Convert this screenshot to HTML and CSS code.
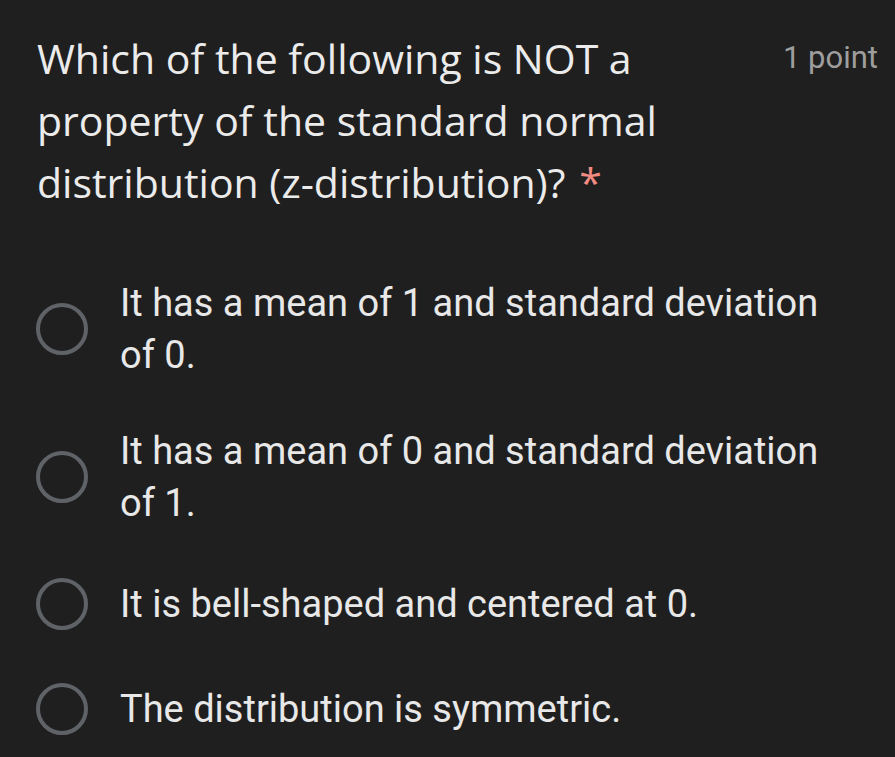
FILE: index.html
```html
<!DOCTYPE html>
<html>
<head>
<meta charset="utf-8">
<link rel="stylesheet" href="styles.css">
</head>
<body>
<div class="card">
  <div class="header">
    <div class="title">Which of the following is NOT a property of the standard normal distribution (z-distribution)?<span class="req">*</span></div>
    <div class="points">1 point</div>
  </div>
  <div class="options">
    <div class="option"><span class="radio"></span><span class="label">It has a mean of 1 and standard deviation of 0.</span></div>
    <div class="option"><span class="radio"></span><span class="label">It has a mean of 0 and standard deviation of 1.</span></div>
    <div class="option"><span class="radio"></span><span class="label">It is bell-shaped and centered at 0.</span></div>
    <div class="option"><span class="radio"></span><span class="label">The distribution is symmetric.</span></div>
  </div>
</div>
</body>
</html>
```

FILE: styles.css
```css
html, body {
  margin: 0;
  padding: 0;
  background: #1f1f1f;
  height: 100%;
}
.card {
  padding: 27px 17px 0 37px;
  color: #e8e8e8;
}
.header {
  display: flex;
  justify-content: space-between;
  align-items: flex-start;
}
.title {
  width: 700px;
  font-family: "Open Sans", "Liberation Sans", sans-serif;
  font-size: 41px;
  line-height: 62px;
  color: #ebebeb;
}
.req {
  color: #f28b82;
  margin-left: 14px;
}
.points {
  font-family: Roboto, "Liberation Sans", sans-serif;
  font-size: 31px;
  line-height: 62px;
  color: #9e9e9e;
  white-space: nowrap;
}
.options {
  margin-top: 42px;
}
.option {
  display: flex;
  align-items: center;
  padding: 22px 0;
  min-height: 105px;
  box-sizing: border-box;
}
.radio {
  flex: none;
  width: 44px;
  height: 44px;
  border: 4px solid #5f6368;
  border-radius: 50%;
  margin-left: -1px;
  margin-right: 32px;
}
.label {
  font-family: Roboto, "Liberation Sans", sans-serif;
  font-size: 38px;
  line-height: 52px;
  max-width: 720px;
  color: #e8e8e8;
}
```
